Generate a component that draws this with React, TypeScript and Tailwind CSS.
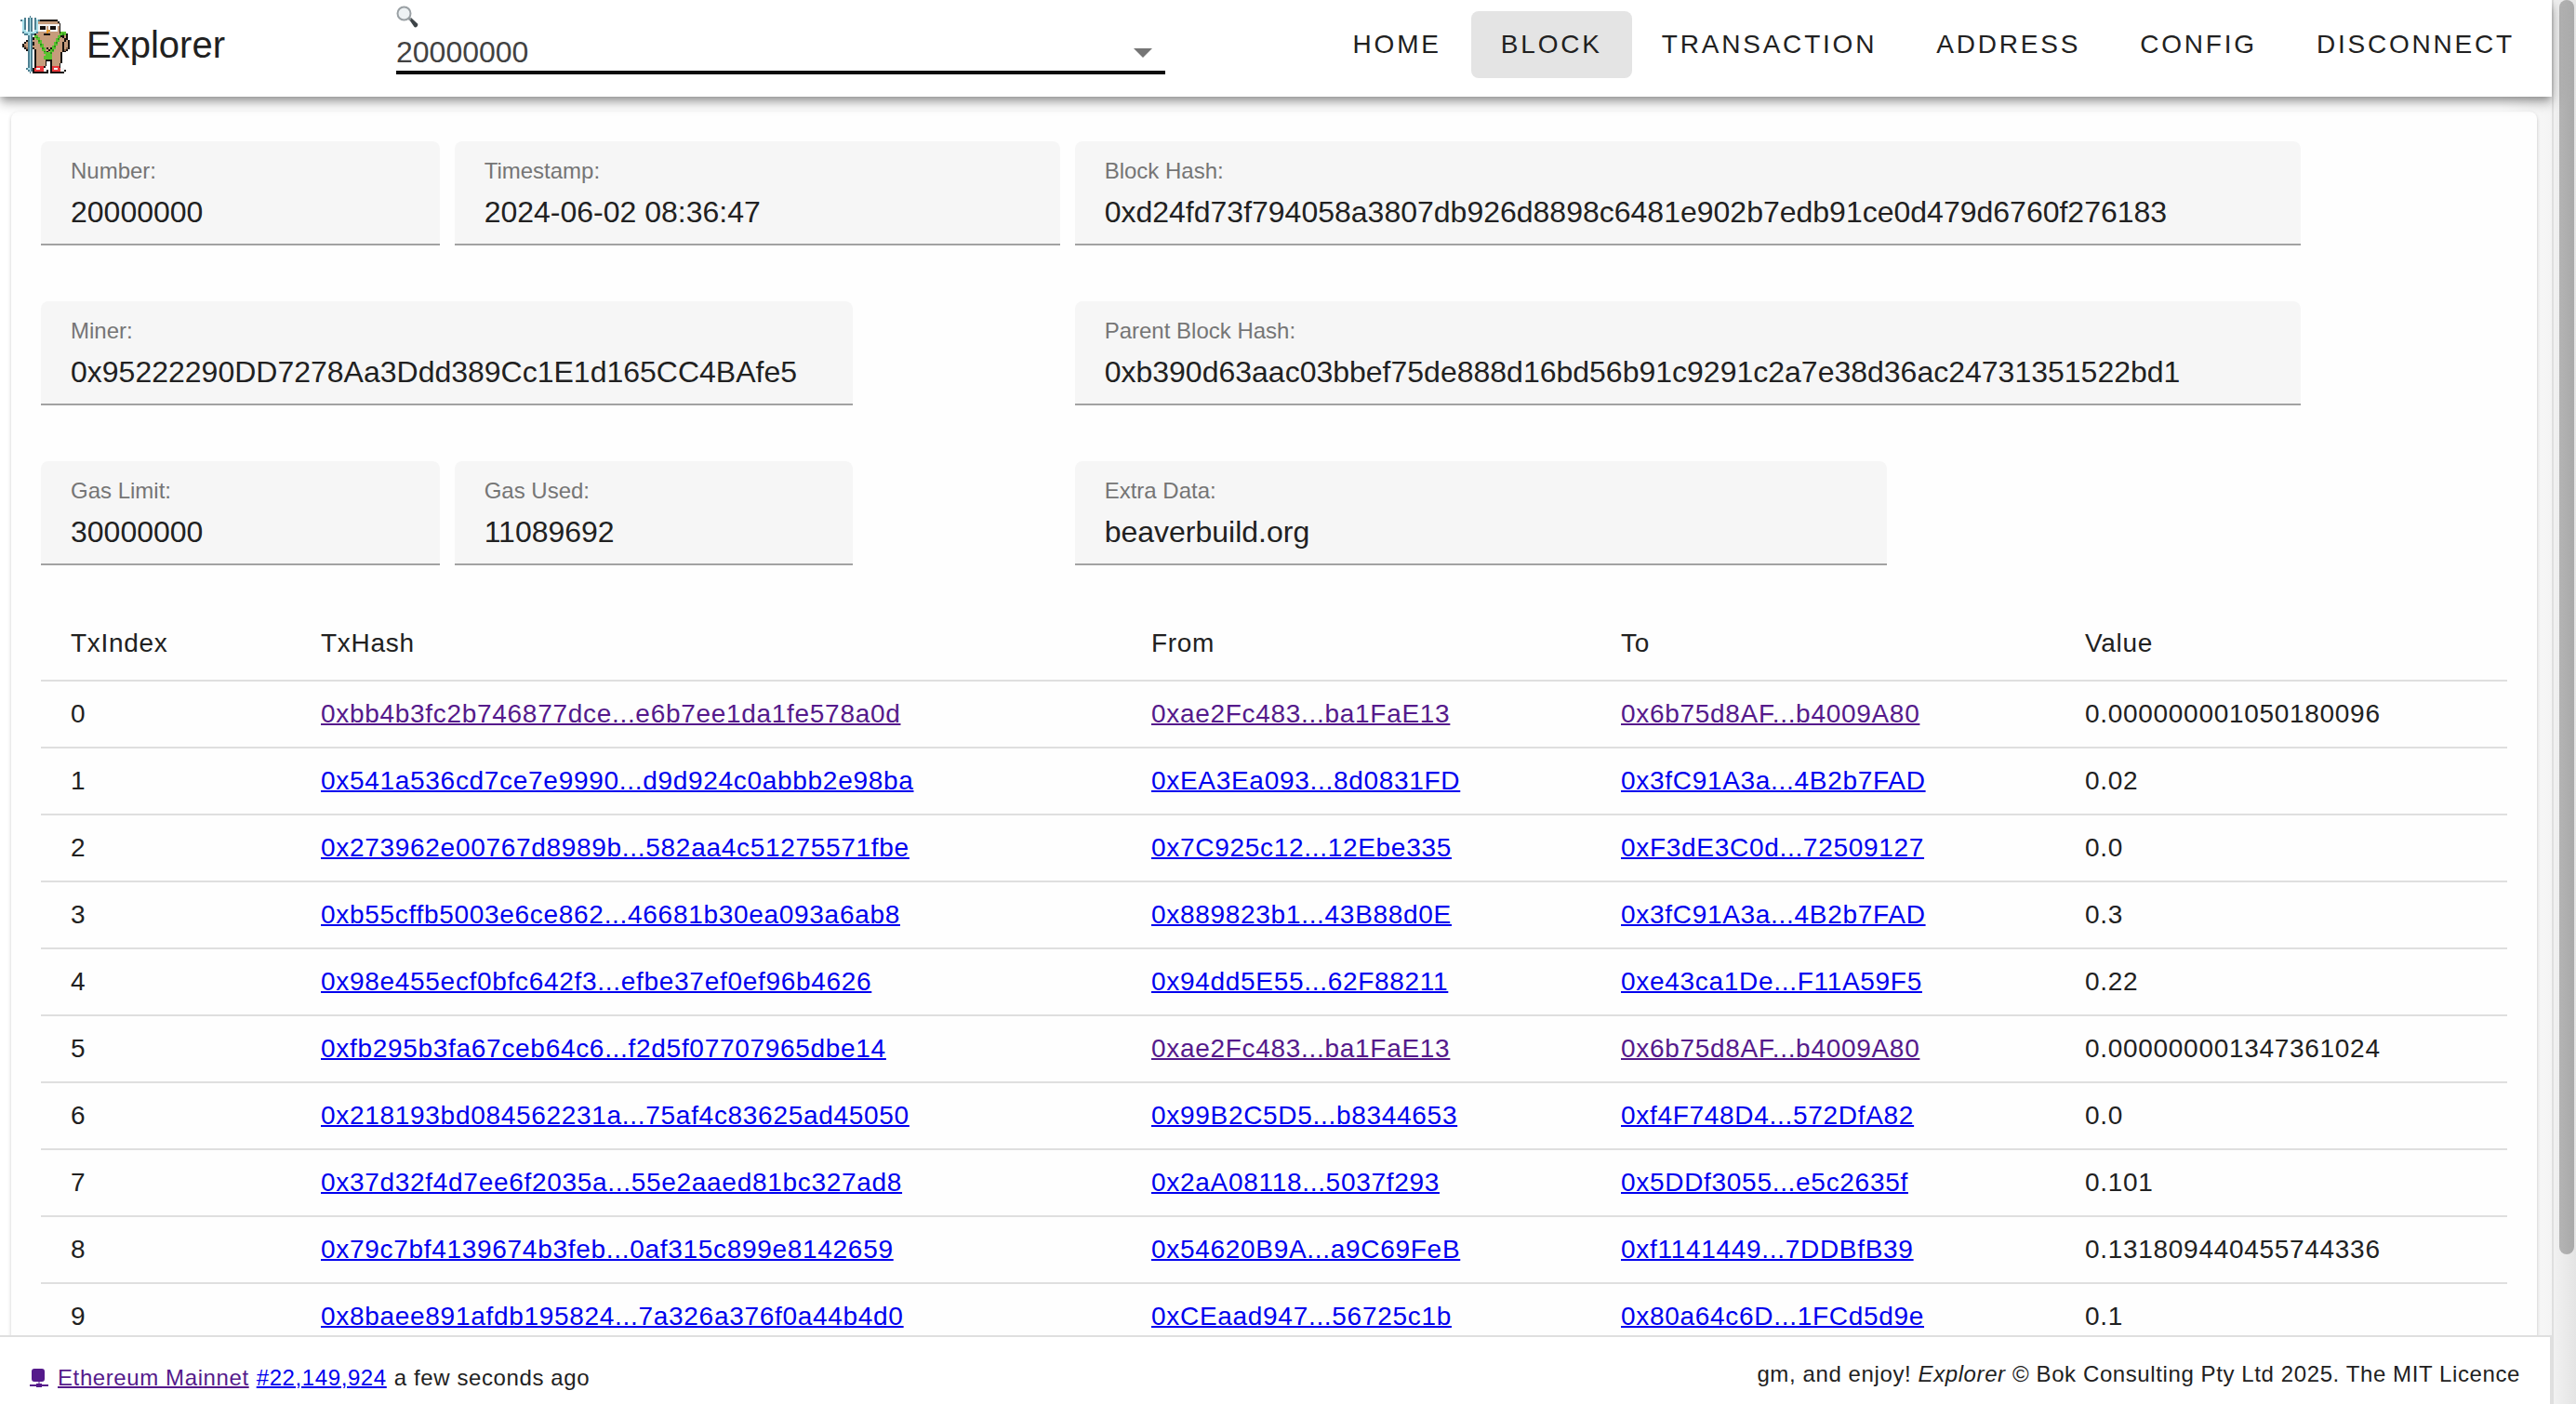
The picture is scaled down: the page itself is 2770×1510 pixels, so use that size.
import React from "react";

const palette: Record<string, string> = {
  k: "#17120f",
  b: "#c69c7b",
  d: "#8a6549",
  c: "#a9e0ea",
  n: "#4d7f90",
  w: "#f4f4f4",
  g: "#58c22e",
  G: "#2f8d1c",
  r: "#e8383b",
  o: "#e89a2c",
};

const mole = [
  ".....n......................",
  "..n.ncn.n...................",
  "ncn.ncn.ncnkkkkkkkkkk.......",
  ".cn.ncn.ncbbbbbbbbbbbk......",
  ".cn.ncn.ncbbbbbbbbbbbbk.....",
  ".cn.ncn.ncwwwwwwwwwwwwk.....",
  ".cn.ncn.ncwkkkwbwkkkwbk.....",
  ".cn.ncn.ncwkkkwbwkkkwbk.....",
  ".cc.ncn.ccwwwwwoowwwwbk.....",
  ".ncccccccnbbbbbobbbbbbkggg..",
  "..nnccnnkbbbbkkkkbbbbbggGgk.",
  "....ncn.ggbbbbbbbbbbbggkkbk.",
  "....ncnkgGgbbbbbbbbbbgGbkbk.",
  "....ncnkbggbbbbbbbbbgGbbbkk.",
  "...kncnbbbGgbbbbbbbbggbbbkbk",
  "..kbncnkbbggbbbbbbbgGbbbkbbk",
  ".kbbncnkbbbGgbbbbbbggbbbkbbk",
  ".kdbncnbbbbggbbbbbgGbbbbkbbk",
  "..kdncnkbbbbGgbkbkggbbbbkbdk",
  "...kncn.kbbbggbbkgGbbbbbkdk.",
  "....ncn.kbbbbGgkbggbbbbbkk..",
  "....ncn.kbbbbggggGbbbbbk....",
  "....ncn.kbbbbbggggbbbbbk....",
  "....ncn.kbbbbgggggbbbbbk....",
  "....ncn.kbbbbgggggbbbbbk....",
  "....ncn.kbbbbbkkkkbbbbbk....",
  "....ncn.kbbbbbk..kbbbbbk....",
  "....ncn.kbbbbbk..kbbbbk.....",
  "....ncn.kbbbbbk..kbbbbk.....",
  "....ncn.krrrrk...krrrrk.....",
  "...nccnkrwwrrww..krwwrrww...",
  "....ncnkrrrrrwwk.krrrrrwwk..",
  ".....n.kkkkkkkkk.kkkkkkkk...",
];

function Mole() {
  return (
    <svg viewBox="0 0 28 33" className="h-[62px] w-[53px]" shapeRendering="crispEdges" aria-hidden="true">
      {mole.flatMap((row, y) =>
        row.split("").map((c, x) =>
          palette[c] ? <rect key={`${x}-${y}`} x={x} y={y} width="1" height="1" fill={palette[c]} /> : null
        )
      )}
    </svg>
  );
}

function Magnifier() {
  return (
    <svg viewBox="0 0 24 24" className="size-6" aria-hidden="true">
      <path d="M14 15l2-2 7 6.500q1 1.500-.5 3t-3 .5z" fill="#3d4347" />
      <path d="M12.500 14.500l2-2 2 2-2 2z" fill="#8b9296" />
      <circle cx="8.500" cy="8.500" r="7" fill="#eef2f4" stroke="#9aa0a4" strokeWidth="2" />
    </svg>
  );
}

const nav = ["Home", "Block", "Transaction", "Address", "Config", "Disconnect"];

const fields = [
  { id: "number", label: "Number:", value: "20000000", span: "col-span-2" },
  { id: "timestamp", label: "Timestamp:", value: "2024-06-02 08:36:47", span: "col-span-3" },
  { id: "hash", label: "Block Hash:", value: "0xd24fd73f794058a3807db926d8898c6481e902b7edb91ce0d479d6760f276183", span: "col-span-6" },
  { id: "miner", label: "Miner:", value: "0x95222290DD7278Aa3Ddd389Cc1E1d165CC4BAfe5", span: "col-span-4 col-start-1" },
  { id: "parent", label: "Parent Block Hash:", value: "0xb390d63aac03bbef75de888d16bd56b91c9291c2a7e38d36ac24731351522bd1", span: "col-span-6 col-start-6" },
  { id: "limit", label: "Gas Limit:", value: "30000000", span: "col-span-2 col-start-1" },
  { id: "used", label: "Gas Used:", value: "11089692", span: "col-span-2" },
  { id: "extra", label: "Extra Data:", value: "beaverbuild.org", span: "col-span-4 col-start-6" },
];

type Tx = { hash: string; from: string; to: string; value: string; hashSeen?: boolean; seen?: boolean };

const txs: Tx[] = [
  { hash: "0xbb4b3fc2b746877dce...e6b7ee1da1fe578a0d", from: "0xae2Fc483...ba1FaE13", to: "0x6b75d8AF...b4009A80", value: "0.000000001050180096", hashSeen: true, seen: true },
  { hash: "0x541a536cd7ce7e9990...d9d924c0abbb2e98ba", from: "0xEA3Ea093...8d0831FD", to: "0x3fC91A3a...4B2b7FAD", value: "0.02" },
  { hash: "0x273962e00767d8989b...582aa4c51275571fbe", from: "0x7C925c12...12Ebe335", to: "0xF3dE3C0d...72509127", value: "0.0" },
  { hash: "0xb55cffb5003e6ce862...46681b30ea093a6ab8", from: "0x889823b1...43B88d0E", to: "0x3fC91A3a...4B2b7FAD", value: "0.3" },
  { hash: "0x98e455ecf0bfc642f3...efbe37ef0ef96b4626", from: "0x94dd5E55...62F88211", to: "0xe43ca1De...F11A59F5", value: "0.22" },
  { hash: "0xfb295b3fa67ceb64c6...f2d5f07707965dbe14", from: "0xae2Fc483...ba1FaE13", to: "0x6b75d8AF...b4009A80", value: "0.000000001347361024", seen: true },
  { hash: "0x218193bd084562231a...75af4c83625ad45050", from: "0x99B2C5D5...b8344653", to: "0xf4F748D4...572DfA82", value: "0.0" },
  { hash: "0x37d32f4d7ee6f2035a...55e2aaed81bc327ad8", from: "0x2aA08118...5037f293", to: "0x5DDf3055...e5c2635f", value: "0.101" },
  { hash: "0x79c7bf4139674b3feb...0af315c899e8142659", from: "0x54620B9A...a9C69FeB", to: "0xf1141449...7DDBfB39", value: "0.131809440455744336" },
  { hash: "0x8baee891afdb195824...7a326a376f0a44b4d0", from: "0xCEaad947...56725c1b", to: "0x80a64c6D...1FCd5d9e", value: "0.1" },
];

function TextLink({ seen, children }: { seen?: boolean; children: React.ReactNode }) {
  return (
    <a href="#" className={seen ? "text-[#551a8b] underline decoration-2" : "text-[#0000ee] underline decoration-2"}>
      {children}
    </a>
  );
}

export default function App() {
  return (
    <div className="flex h-screen overflow-hidden bg-white font-['Liberation_Sans',Arial,sans-serif] text-[28px] text-[#212121]">
      <div className="flex min-w-0 flex-1 flex-col">
        <header className="relative z-10 flex h-[104px] shrink-0 items-start bg-white shadow-[0_4px_8px_-2px_rgba(0,0,0,0.3),0_8px_10px_rgba(0,0,0,0.16),0_2px_20px_rgba(0,0,0,0.12)]">
          <div className="flex h-24 w-[426px] shrink-0 items-center gap-[18px] pl-[22px]">
            <Mole />
            <h1 className="text-[40px]">Explorer</h1>
          </div>
          <div className="flex h-20 w-[827px] shrink-0 flex-col border-b-4 border-[#0c0c0c] pt-1.5">
            <label htmlFor="search" aria-label="Search">
              <Magnifier />
            </label>
            <div className="flex flex-1 items-end">
              <input id="search" defaultValue="20000000" className="h-10 min-w-0 flex-1 text-[32px] text-[#424242] outline-none" />
              <button aria-label="Show options" className="mr-3.5 mb-3.5 border-x-10 border-t-10 border-x-transparent border-t-[#757575]" />
            </div>
          </div>
          <nav className="flex flex-1 justify-end pt-3 pr-2">
            {nav.map((item) => (
              <button
                key={item}
                className={
                  item === "Block"
                    ? "h-[72px] rounded-lg bg-[#e4e4e4] px-8 tracking-widest uppercase"
                    : "h-[72px] rounded-lg px-8 tracking-widest uppercase"
                }
              >
                {item}
              </button>
            ))}
          </nav>
        </header>

        <main className="min-h-0 flex-1 overflow-hidden bg-linear-to-r from-white from-98% to-[#f4f4f4] pt-4 pr-4 pl-3">
          <section className="rounded-lg bg-[#fefefe] px-8 pt-8 shadow-[0_2px_4px_rgba(0,0,0,0.2)]">
            <div className="grid grid-cols-12 gap-x-4 gap-y-[60px]">
              {fields.map((f) => (
                <div key={f.id} className={`${f.span} flex h-28 flex-col rounded-t-lg border-b-2 border-[#a2a2a2] bg-[#f6f6f6] px-8 pt-4`}>
                  <label htmlFor={f.id} className="text-2xl text-[#757575]">{f.label}</label>
                  <input id={f.id} readOnly value={f.value} className="w-full text-[32px] leading-[56px] outline-none" />
                </div>
              ))}
            </div>
            <table className="mt-11 w-full table-fixed text-left tracking-wide">
              <thead>
                <tr className="h-20 border-b-2 border-[#dfdfdf]">
                  <th className="w-[269px] pl-8 font-normal">TxIndex</th>
                  <th className="w-[893px] pl-8 font-normal">TxHash</th>
                  <th className="w-[505px] pl-8 font-normal">From</th>
                  <th className="w-[499px] pl-8 font-normal">To</th>
                  <th className="pl-8 font-normal">Value</th>
                </tr>
              </thead>
              <tbody>
                {txs.map((tx, i) => (
                  <tr key={tx.hash} className="h-[72px] border-b-2 border-[#dfdfdf]">
                    <td className="pl-8">{i}</td>
                    <td className="pl-8"><TextLink seen={tx.hashSeen}>{tx.hash}</TextLink></td>
                    <td className="pl-8"><TextLink seen={tx.seen}>{tx.from}</TextLink></td>
                    <td className="pl-8"><TextLink seen={tx.seen}>{tx.to}</TextLink></td>
                    <td className="pl-8">{tx.value}</td>
                  </tr>
                ))}
              </tbody>
            </table>
          </section>
        </main>

        <footer className="flex h-[74px] shrink-0 items-start justify-between border-t-2 border-r-2 border-[#dfdfdf] bg-white px-8 text-2xl tracking-wide">
          <p className="flex items-center gap-2 pt-7">
            <svg viewBox="0 0 20 20" className="mr-0.5 size-5" fill="#551a8b" aria-hidden="true">
              <path d="M5 0h8q3 0 3 3v8q0 3-3 3h-2.500v2H13v1h7v2h-7v1H7v-1H0v-2h7v-1h2.500v-2H5q-3 0-3-3V3q0-3 3-3z" />
            </svg>
            <TextLink seen>Ethereum Mainnet</TextLink>
            <TextLink>#22,149,924</TextLink>
            a few seconds ago
          </p>
          <p className="pt-6">gm, and enjoy! <em>Explorer</em> © Bok Consulting Pty Ltd 2025. The MIT Licence</p>
        </footer>
      </div>
      <div className="w-[26px] shrink-0 border-l-2 border-[#dfdfdf] bg-linear-to-r from-[#f1f1f1] to-[#e4e4e4] px-1.5">
        <div className="h-[1349px] w-4 rounded-full bg-linear-to-r from-[#b4b4b4] to-[#a9a9a9]" />
      </div>
    </div>
  );
}
